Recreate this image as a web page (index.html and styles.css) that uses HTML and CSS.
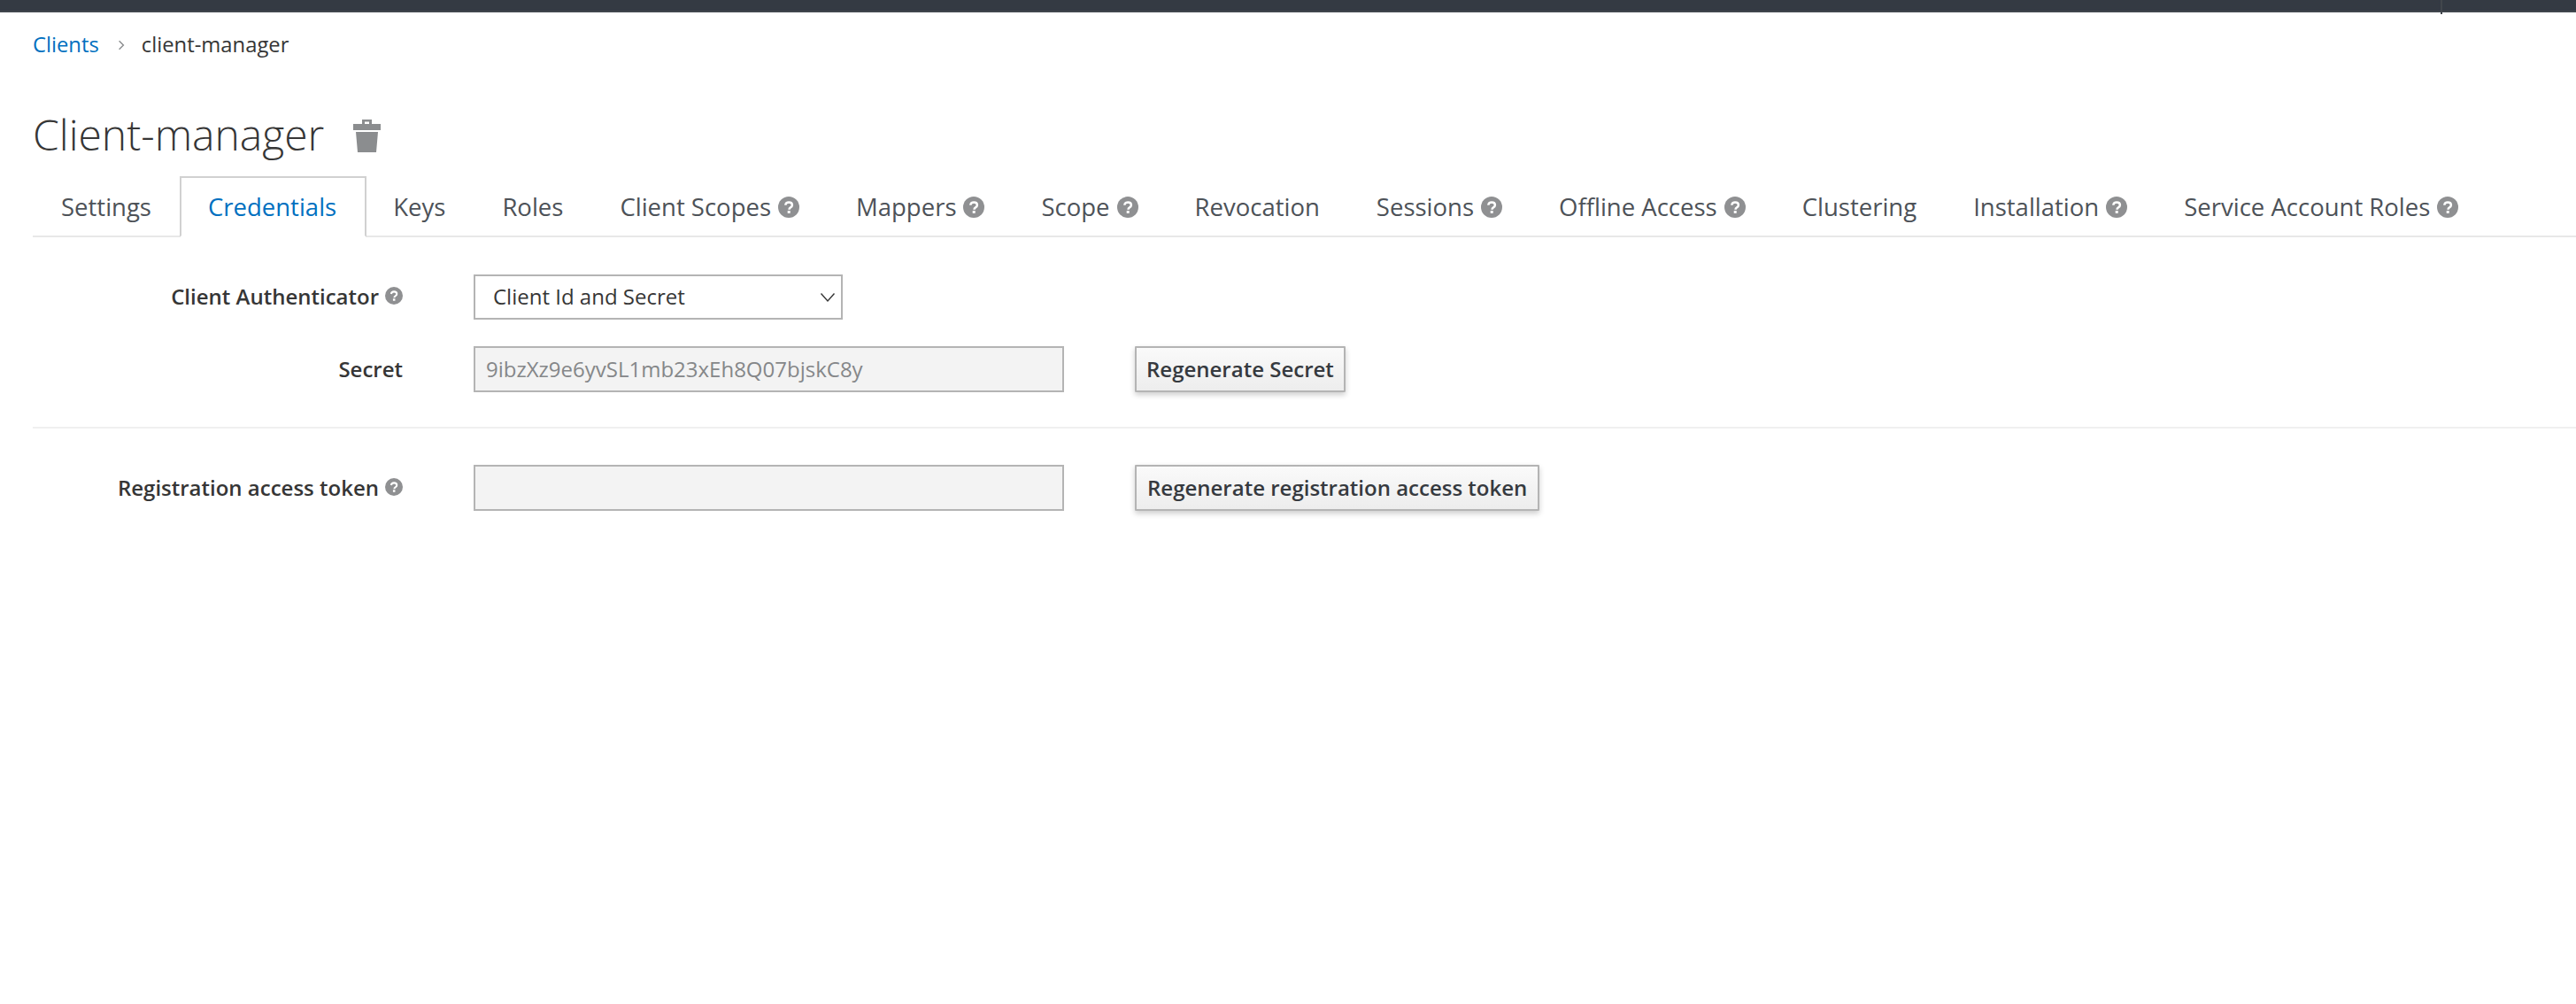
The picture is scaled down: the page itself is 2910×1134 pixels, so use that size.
FILE: index.html
```html
<!DOCTYPE html>
<html lang="en">
<head>
<meta charset="utf-8">
<title>Client-manager</title>
<link rel="stylesheet" href="styles.css">
</head>
<body>
<svg class="defs" width="0" height="0" aria-hidden="true">
  <symbol id="help" viewBox="0 0 24 24">
    <circle cx="12" cy="12" r="12" fill="#8f9092"/>
    <path d="M8.2 9.6c.3-2 1.800-3.200 3.900-3.200 2.200 0 3.800 1.300 3.800 3.100 0 1.400-.8 2.100-1.800 2.800-1 .7-1.600 1.200-1.600 2.400" fill="none" stroke="#fff" stroke-width="2.500"/>
    <rect x="10.700" y="16" width="3" height="2.900" fill="#fff"/>
  </symbol>
</svg>
<header class="topbar"><span class="tick"></span></header>
<main class="page">
  <nav class="crumbs">
    <a class="link" href="#">Clients</a>
    <svg class="crumb-sep" viewBox="0 0 10 16" width="8" height="14"><path d="M2 2l6 6-6 6" fill="none" stroke="#8b8d8f" stroke-width="1.800"/></svg>
    <span>client-manager</span>
  </nav>
  <div class="heading">
    <h1>Client-manager</h1>
    <svg class="trash" viewBox="0 0 31 37" width="31" height="37"><path fill="#8b8d8f" fill-rule="evenodd" d="M10 0h11v5h10v7H0V5h10zM13 2.500V5h5V2.500zM3 14h25l-2 23H5z"/></svg>
  </div>
  <ul class="tabs">
    <li class="tab">Settings</li>
    <li class="tab active">Credentials</li>
    <li class="tab">Keys</li>
    <li class="tab">Roles</li>
    <li class="tab">Client Scopes<svg class="help-tab"><use href="#help"/></svg></li>
    <li class="tab">Mappers<svg class="help-tab"><use href="#help"/></svg></li>
    <li class="tab">Scope<svg class="help-tab"><use href="#help"/></svg></li>
    <li class="tab">Revocation</li>
    <li class="tab">Sessions<svg class="help-tab"><use href="#help"/></svg></li>
    <li class="tab">Offline Access<svg class="help-tab"><use href="#help"/></svg></li>
    <li class="tab">Clustering</li>
    <li class="tab">Installation<svg class="help-tab"><use href="#help"/></svg></li>
    <li class="tab">Service Account Roles<svg class="help-tab"><use href="#help"/></svg></li>
  </ul>
  <form class="form">
    <section class="group first">
      <div class="row">
        <label class="label">Client Authenticator<svg class="help-label"><use href="#help"/></svg></label>
        <div class="select-wrap">
          <select class="select"><option>Client Id and Secret</option></select>
          <svg class="chevron" viewBox="0 0 18 12" width="18" height="12"><path d="M1.500 1.500L9 10l7.500-8.500" fill="none" stroke="#363636" stroke-width="1.400"/></svg>
        </div>
      </div>
      <div class="row">
        <label class="label">Secret</label>
        <input class="input" readonly value="9ibzXz9e6yvSL1mb23xEh8Q07bjskC8y">
        <button class="btn" type="button">Regenerate Secret</button>
      </div>
    </section>
    <section class="group">
      <div class="row">
        <label class="label">Registration access token<svg class="help-label"><use href="#help"/></svg></label>
        <input class="input" readonly value="">
        <button class="btn wide" type="button">Regenerate registration access token</button>
      </div>
    </section>
  </form>
</main>
</body>
</html>
```
FILE: styles.css
```css
* { box-sizing: border-box; }
html, body { margin: 0; padding: 0; background: #fff; }
body { font-family: "Open Sans", "Liberation Sans", sans-serif; color: #363636; overflow: hidden; height: 1134px; }
.defs { display: block; height: 0; }
.topbar { position: relative; height: 14px; background: #343a43; border-bottom: 2px solid #41464c; }
.tick { position: absolute; left: 2757px; top: 0; width: 2px; height: 16px; background: #41464c; }
.page { padding: 0 0 0 37px; }
.crumbs { display: flex; align-items: center; height: 76px; padding-bottom: 5px; font-size: 23.800px; }
.link { color: #0070c0; text-decoration: none; }
.crumb-sep { margin: 2px 19px 0 21px; }
.heading { display: flex; align-items: center; height: 109px; padding-top: 15px; }
h1 { margin: 0; font-size: 48px; font-weight: 300; color: #363636; line-height: 60px; }
.trash { margin: 3px 0 0 33px; }
.tabs { display: flex; list-style: none; margin: 0; padding: 0; height: 69px; border-bottom: 2px solid #e8e8e8; font-size: 27.500px; color: #4d5258; }
.tab { display: flex; align-items: center; height: 69px; padding: 0 32px; white-space: nowrap; }
.active { color: #0070c0; padding: 0 32px 0 30px; margin-right: -2px; border: 2px solid #d1d1d1; border-bottom: 2px solid #fff; background: #fff; }
.help-tab { width: 24px; height: 24px; margin-left: 8px; }
.form { display: block; }
.group { display: flex; flex-direction: column; gap: 30px; padding: 41px 0 39px; border-bottom: 2px solid #f0f0f0; }
.group:last-child { border-bottom: 0; }
.row { display: flex; align-items: center; height: 52px; }
.label { display: flex; align-items: center; justify-content: flex-end; width: 418px; padding-bottom: 2px; font-size: 24px; font-weight: 600; color: #363636; white-space: nowrap; }
.help-label { width: 20px; height: 20px; margin-left: 7px; }
.select-wrap { position: relative; margin-left: 80px; }
.select { display: block; appearance: none; -webkit-appearance: none; width: 417px; height: 51px; padding: 0 20px 2px; border: 2px solid #b4b4b4; border-radius: 0; background: #fff; font: 24px "Open Sans", sans-serif; color: #363636; }
.chevron { position: absolute; right: 8px; top: 20px; }
.input { display: block; margin-left: 80px; width: 667px; height: 52px; padding: 0 12px 2px; border: 2px solid #b4b4b4; border-radius: 0; background: #f3f3f3; font: 24px "Open Sans", sans-serif; color: #858789; outline: none; }
.btn { display: block; margin-left: 80px; height: 52px; padding: 0 11px 2px; border: 2px solid #b4b4b4; border-radius: 1px; background: linear-gradient(#fafafa, #ededed); box-shadow: 0 3px 6px rgba(0,0,0,.2); font: 600 24px "Open Sans", sans-serif; color: #363a3f; white-space: nowrap; }
.wide { padding: 0 12px 2px; }
```
